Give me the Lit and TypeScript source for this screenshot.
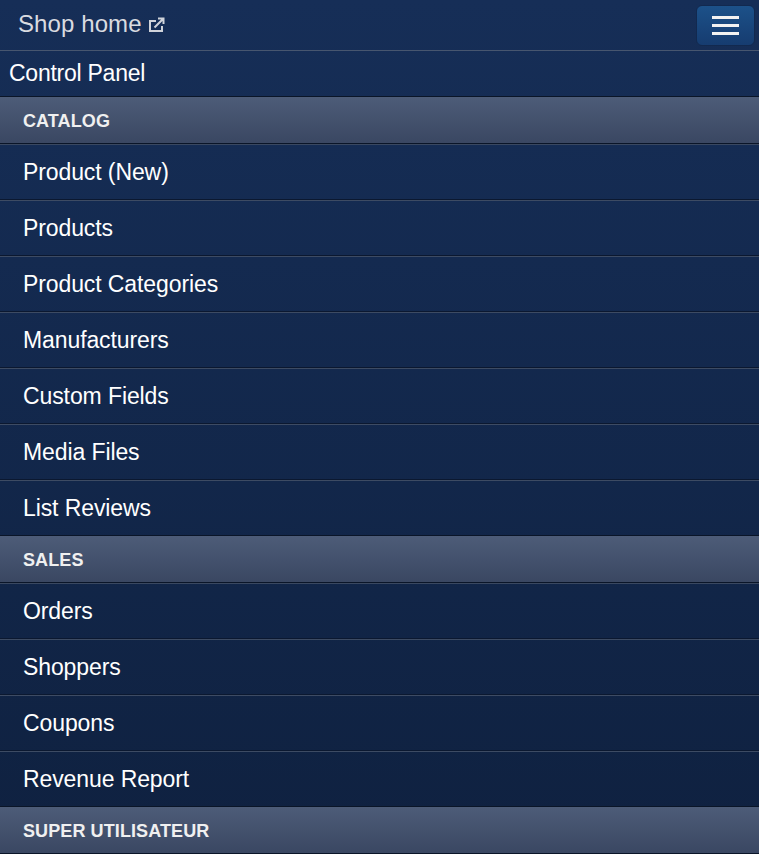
import { LitElement, html, css } from 'lit';
import { customElement } from 'lit/decorators.js';

const groups = [
  {
    title: 'Catalog',
    links: ['Product (New)', 'Products', 'Product Categories', 'Manufacturers', 'Custom Fields', 'Media Files', 'List Reviews'],
  },
  {
    title: 'Sales',
    links: ['Orders', 'Shoppers', 'Coupons', 'Revenue Report'],
  },
  { title: 'Super Utilisateur', links: [] as string[] },
];

@customElement('app-root')
export class AppRoot extends LitElement {
  static styles = css`
    :host {
      display: block;
      height: 854px;
      overflow: hidden;
      background: linear-gradient(#162e57, #0f2140);
      font-family: 'Liberation Sans', Arial, sans-serif;
      color: #fff;
    }
    .navbar {
      display: flex;
      align-items: center;
      justify-content: space-between;
      height: 50px;
      padding: 0 4px 0 18px;
      border-bottom: 1px solid #47566f;
    }
    .brand {
      display: flex;
      align-items: center;
      gap: 7px;
      padding-bottom: 2px;
      font-size: 24px;
      letter-spacing: 0.1px;
      line-height: 48px;
      color: #d9dbe0;
      text-decoration: none;
    }
    .brand svg {
      display: block;
      margin-top: 1px;
    }
    .toggle {
      display: flex;
      flex-direction: column;
      justify-content: center;
      gap: 5px;
      width: 59px;
      height: 41px;
      padding: 0 15px;
      box-sizing: border-box;
      border: 1px solid #12294f;
      border-radius: 6px;
      background: linear-gradient(#1c5189, #163c70);
    }
    .toggle span {
      display: block;
      height: 3px;
      background: #f2f2f2;
    }
    .title {
      height: 45px;
      padding-left: 9px;
      font-size: 23px;
      letter-spacing: -0.25px;
      line-height: 45px;
    }
    .group {
      height: 48px;
      box-sizing: border-box;
      padding-left: 23px;
      border-top: 1px solid #0a1528;
      border-bottom: 1px solid #0a1528;
      box-shadow: 0 1px 0 #3a4860;
      background: linear-gradient(#4d5c78, #3a4762);
      font-size: 18px;
      font-weight: bold;
      letter-spacing: 0.1px;
      line-height: 48px;
      text-transform: uppercase;
      color: #f0f0f0;
    }
    a.item {
      display: block;
      height: 56px;
      box-sizing: border-box;
      padding-left: 23px;
      font-size: 23px;
      letter-spacing: -0.1px;
      line-height: 56px;
      color: #fff;
      text-decoration: none;
      border-bottom: 1px solid #0b1830;
      box-shadow: 0 1px 0 #3d4b63;
    }
    a.item:last-child {
      height: 55px;
      border-bottom: none;
      box-shadow: none;
    }
  `;

  render() {
    return html`
      <div class="navbar">
        <a class="brand" href="#">
          Shop home
          <svg width="16" height="16" viewBox="0 0 16 16" fill="none" stroke="#d0d3da" stroke-width="2">
            <path d="M7 4H1v10h12V9" />
            <path d="M5.500 10.500L14 2M9 1.500h5.500V7" />
          </svg>
        </a>
        <div class="toggle"><span></span><span></span><span></span></div>
      </div>
      <div class="title">Control Panel</div>
      ${groups.map(
        (g) => html`
          <div class="group">${g.title}</div>
          <div>${g.links.map((l) => html`<a class="item" href="#">${l}</a>`)}</div>
        `,
      )}
    `;
  }
}
